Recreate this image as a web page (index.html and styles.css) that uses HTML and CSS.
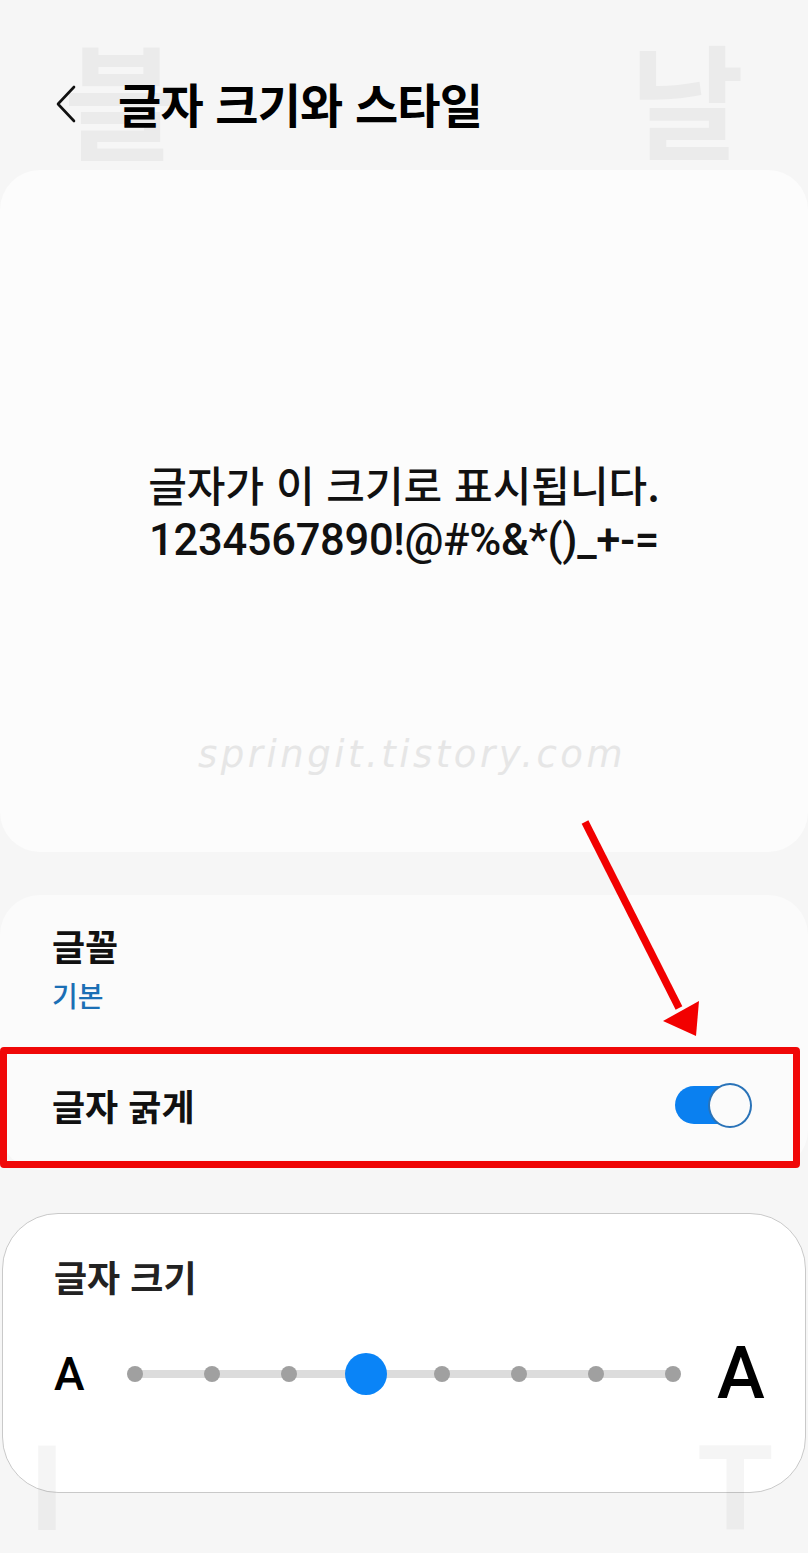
FILE: index.html
```html
<!DOCTYPE html>
<html lang="ko">
<head>
<meta charset="utf-8">
<title>글자 크기와 스타일</title>
<link rel="stylesheet" href="styles.css">
</head>
<body>
<div class="page">
  <div class="wm wm-tl">블</div>
  <div class="wm wm-tr">날</div>

  <header class="header">
    <svg class="back" width="22" height="38" viewBox="0 0 22 38"><path d="M19 2 L3 19 L19 36" fill="none" stroke="#111" stroke-width="2.6" stroke-linecap="round" stroke-linejoin="round"/></svg>
    <h1 class="title">글자 크기와 스타일</h1>
  </header>

  <section class="card preview">
    <p class="pv-ko">글자가 이 크기로 표시됩니다.</p>
    <p class="pv-en">1234567890!@#%&amp;*()_+-=</p>
    <div class="blog-wm">springit.tistory.com</div>
  </section>

  <section class="card settings">
    <div class="item font-item">
      <div class="item-title">글꼴</div>
      <div class="item-sub">기본</div>
    </div>
    <div class="item bold-item">
      <div class="item-title">글자 굵게</div>
      <div class="switch"><span class="knob"></span></div>
    </div>
  </section>

  <section class="card size-card">
    <div class="item-title">글자 크기</div>
    <div class="slider-row">
      <span class="a-small">A</span>
      <div class="track">
        <span class="dot"></span>
        <span class="dot"></span>
        <span class="dot"></span>
        <span class="dot active"></span>
        <span class="dot"></span>
        <span class="dot"></span>
        <span class="dot"></span>
        <span class="dot"></span>
      </div>
      <span class="a-big">A</span>
    </div>
  </section>

  <div class="wm wm-bl">I</div>
  <div class="wm wm-br">T</div>

  <div class="highlight"></div>
  <svg class="arrow" width="160" height="240" viewBox="0 0 160 240">
    <line x1="25" y1="22" x2="119" y2="208" stroke="#f20000" stroke-width="7.5"/>
    <polygon points="103,221 139,201 136,236" fill="#f20000"/>
  </svg>
</div>
</body>
</html>
```

FILE: styles.css
```css
html, body {
  margin: 0;
  padding: 0;
}
body {
  background: #f6f6f6;
  font-family: "Noto Sans CJK KR", "Noto Sans", sans-serif;
  color: #111;
}
.page {
  position: relative;
  width: 808px;
  height: 1553px;
  overflow: hidden;
}

/* faint watermark glyphs */
.wm {
  position: absolute;
  color: rgba(0, 0, 0, 0.045);
  font-weight: 700;
  line-height: 1;
  pointer-events: none;
  z-index: 0;
}
.wm-tl { left: 64px; top: 34px; font-size: 124px; }
.wm-tr { left: 630px; top: 34px; font-size: 124px; }
.wm-bl, .wm-br {
  z-index: 2;
  top: 1434px;
  font-size: 122px;
  line-height: 0.9;
  font-family: "Liberation Sans", sans-serif;
  color: rgba(0, 0, 0, 0.04);
}
.wm-bl { left: 30px; }
.wm-br { left: 698px; }

.header {
  position: relative;
  z-index: 1;
  height: 170px;
  box-sizing: border-box;
  padding: 73px 0 0 55px;
  display: flex;
  align-items: flex-start;
}
.back {
  margin-top: 12px;
  flex: none;
}
.title {
  margin: 0 0 0 41px;
  font-size: 47px;
  line-height: 60px;
  font-weight: 700;
  color: #000;
  letter-spacing: -0.8px;
}

.card {
  position: relative;
  z-index: 1;
  background: #fcfcfc;
  border-radius: 40px;
}

.preview {
  height: 682px;
  display: flex;
  flex-direction: column;
  align-items: center;
  justify-content: center;
  padding-top: 2px;
  box-sizing: border-box;
}
.pv-ko, .pv-en {
  margin: 0;
  line-height: 57px;
  color: #111;
}
.pv-ko {
  font-size: 42px;
  font-weight: 500;
  letter-spacing: 0;
}
.pv-en {
  font-family: Roboto, "Liberation Sans", sans-serif;
  font-size: 43.5px;
  font-weight: 500;
  letter-spacing: -0.3px;
}
.blog-wm {
  position: absolute;
  left: 198px;
  top: 566px;
  font-family: "DejaVu Sans", sans-serif;
  font-style: italic;
  font-weight: 300;
  font-size: 37px;
  letter-spacing: 3.5px;
  color: #e6e6e6;
  line-height: 1;
}

.settings {
  margin-top: 43px;
  height: 275px;
  background: #fbfbfb;
}
.item {
  padding: 0 52px;
}
.font-item {
  padding-top: 26px;
  height: 152px;
  box-sizing: border-box;
}
.item-title {
  font-size: 36px;
  line-height: 48px;
  font-weight: 700;
  color: #111;
}
.item-sub {
  font-size: 28px;
  line-height: 38px;
  font-weight: 500;
  color: #1b6fb5;
  margin-top: 7px;
}
.bold-item {
  height: 116px;
  display: flex;
  align-items: center;
  justify-content: space-between;
  padding-right: 57px;
}
.switch {
  position: relative;
  width: 76px;
  height: 38px;
  display: flex;
  align-items: center;
  justify-content: flex-end;
}
.switch::before {
  content: "";
  position: absolute;
  left: 0;
  top: 0;
  width: 64px;
  height: 38px;
  border-radius: 19px;
  background: #0a80f0;
}
.knob {
  position: relative;
  width: 40px;
  height: 41px;
  border-radius: 50%;
  background: #fbfbfb;
  border: 2px solid #2a73b8;
  margin-right: -1px;
}

.size-card {
  margin: 43px 2px 0;
  height: 280px;
  box-sizing: border-box;
  background: #fff;
  border: 1px solid #c9c9c9;
  border-radius: 56px;
  padding: 38px 0 0 51px;
}
.size-card .item-title {
  color: #222;
}
.slider-row {
  display: flex;
  align-items: center;
  margin-top: 42px;
  height: 64px;
}
.a-small {
  font-family: Roboto, "Liberation Sans", sans-serif;
  font-size: 46px;
  font-weight: 500;
  color: #000;
  width: 32px;
  line-height: 1;
  margin-left: 0;
}
.track {
  margin-left: 41px;
  width: 554px;
  height: 44px;
  display: flex;
  align-items: center;
  justify-content: space-between;
  background: linear-gradient(#dcdcdc, #dcdcdc) center / calc(100% - 16px) 8px no-repeat;
}
.dot {
  width: 16px;
  height: 16px;
  border-radius: 50%;
  background: #a0a0a0;
}
.dot.active {
  width: 42px;
  height: 42px;
  margin: 0 -13px;
  background: #0a84f7;
}
.a-big {
  font-family: Roboto, "Liberation Sans", sans-serif;
  font-size: 72px;
  font-weight: 500;
  color: #000;
  line-height: 1;
  margin-left: 36px;
}

.highlight {
  position: absolute;
  left: 0;
  top: 1047px;
  width: 800px;
  height: 121px;
  box-sizing: border-box;
  border: 7px solid #f00808;
  border-radius: 4px;
  z-index: 3;
}
.arrow {
  position: absolute;
  left: 560px;
  top: 800px;
  z-index: 3;
}
```
